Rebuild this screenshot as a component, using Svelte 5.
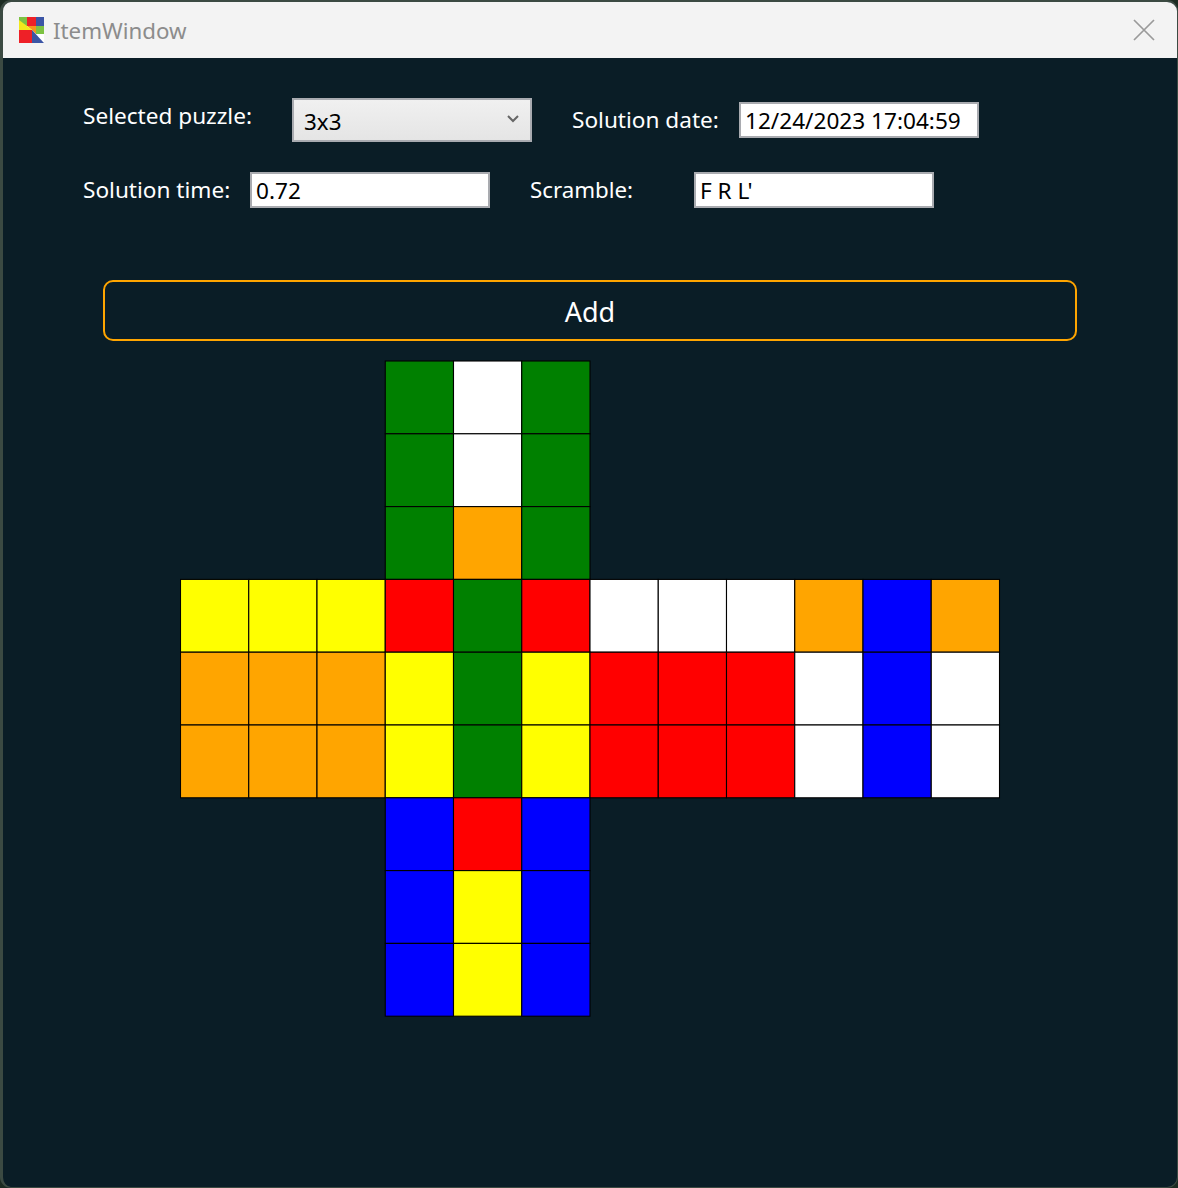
<script>
  const G = '#008000', W = '#ffffff', O = '#ffa500', Y = '#ffff00', R = '#ff0000', B = '#0000ff', _ = null;
  const rows = [
    [_,_,_,G,W,G,_,_,_,_,_,_],
    [_,_,_,G,W,G,_,_,_,_,_,_],
    [_,_,_,G,O,G,_,_,_,_,_,_],
    [Y,Y,Y,R,G,R,W,W,W,O,B,O],
    [O,O,O,Y,G,Y,R,R,R,W,B,W],
    [O,O,O,Y,G,Y,R,R,R,W,B,W],
    [_,_,_,B,R,B,_,_,_,_,_,_],
    [_,_,_,B,Y,B,_,_,_,_,_,_],
    [_,_,_,B,Y,B,_,_,_,_,_,_]
  ];
  const CW = 68.25, CH = 72.8, X0 = 0.5, Y0 = 1;
  const cells = rows.flatMap((row, r) =>
    row.map((fill, c) => ({ fill, x: X0 + c * CW, y: Y0 + r * CH })).filter((cell) => cell.fill)
  );
</script>

<div class="window">
  <header class="titlebar">
    <svg class="logo" viewBox="0 0 25 26" aria-hidden="true">
      <rect width="25" height="26" fill="#fff"/>
      <rect x="0" y="0" width="8" height="9" fill="#7cc242"/>
      <rect x="8" y="0" width="9" height="9" fill="#ee2027"/>
      <rect x="17" y="0" width="8" height="9" fill="#3b55a5"/>
      <rect x="17" y="9" width="8" height="8" fill="#7cc242"/>
      <polygon points="8,9 17,9 17,17 13,13" fill="#f7941d"/>
      <polygon points="0,3 8,9 13,13 0,13" fill="#f2e81c"/>
      <rect x="0" y="13" width="13" height="13" fill="#ee2027"/>
      <polygon points="13,13 25,26 13,26" fill="#3b55a5"/>
    </svg>
    <span class="title">ItemWindow</span>
    <svg class="close" viewBox="0 0 22 22" aria-hidden="true">
      <path d="M1 1 L21 21 M21 1 L1 21" stroke="#9a9a9a" stroke-width="1.7" fill="none"/>
    </svg>
  </header>

  <main class="content">
    <div class="row one">
      <span class="label puzzle">Selected puzzle:</span>
      <div class="select">
        <span>3x3</span>
        <svg viewBox="0 0 12 8" aria-hidden="true"><path d="M1 1 L6 6 L11 1" stroke="#666" stroke-width="2" fill="none"/></svg>
      </div>
      <span class="label date">Solution date:</span>
      <div class="input">12/24/2023 17:04:59</div>
    </div>
    <div class="row two">
      <span class="label time">Solution time:</span>
      <div class="input">0.72</div>
      <span class="label scramble">Scramble:</span>
      <div class="input">F R L'</div>
    </div>

    <button class="add">Add</button>

    <svg class="cube" width="822" height="658" aria-hidden="true">
      {#each cells as cell}
        <rect x={cell.x} y={cell.y} width={CW} height={CH} fill={cell.fill} stroke="#000" stroke-width="1.1"/>
      {/each}
    </svg>
  </main>
</div>

<style>
  :global(body) {
    margin: 0;
    background: #1c2b22;
  }
  .window {
    box-sizing: border-box;
    width: 1178px;
    height: 1188px;
    border: 1px solid #3b4a42;
    border-top-width: 2px;
    border-left-width: 3px;
    border-radius: 11px;
    overflow: hidden;
    background: #0a1d26;
    display: flex;
    flex-direction: column;
    font-family: "Noto Sans", "Open Sans", sans-serif;
  }
  .titlebar {
    height: 56px;
    flex: none;
    background: #f3f3f3;
    display: flex;
    align-items: center;
    padding: 0 22px 0 16px;
  }
  .logo {
    width: 25px;
    height: 26px;
  }
  .title {
    margin-left: 9px;
    font-size: 22.3px;
    color: #8c8c8c;
  }
  .close {
    width: 22px;
    height: 22px;
    margin-left: auto;
  }
  .content {
    padding: 40px 0 0 80px;
  }
  .row {
    display: flex;
    align-items: center;
    height: 44px;
  }
  .two {
    margin-top: 30px;
    height: 36px;
  }
  .label {
    color: #fff;
    font-size: 22.6px;
    line-height: 30px;
  }
  .puzzle {
    width: 209px;
    margin-top: -8px;
  }
  .date {
    margin-left: 40px;
    width: 167px;
  }
  .time {
    width: 167px;
  }
  .scramble {
    margin-left: 40px;
    width: 164px;
    font-size: 22.3px;
  }
  .select {
    box-sizing: border-box;
    width: 240px;
    height: 44px;
    border: 2px solid #a9abb0;
    background: linear-gradient(#f0f0f0, #e5e5e5);
    display: flex;
    align-items: center;
    justify-content: space-between;
    padding: 0 11px 0 10px;
    font-size: 22.4px;
    color: #000;
  }
  .select span {
    padding-top: 2px;
  }
  .select svg {
    width: 12px;
    height: 8px;
    margin-bottom: 3px;
  }
  .input {
    box-sizing: border-box;
    width: 240px;
    height: 36px;
    border: 2px solid #a9abb0;
    background: #fff;
    color: #000;
    font-size: 22.6px;
    line-height: 34px;
    padding-left: 4px;
    white-space: nowrap;
  }
  .add {
    display: block;
    box-sizing: border-box;
    width: 974px;
    height: 61px;
    margin: 72px 0 0 20px;
    padding: 2px 0 0;
    border: 2px solid #ffa500;
    border-radius: 10px;
    background: transparent;
    color: #fff;
    font-family: inherit;
    font-size: 27px;
  }
  .cube {
    display: block;
    margin: 19px 0 0 97px;
  }
</style>
